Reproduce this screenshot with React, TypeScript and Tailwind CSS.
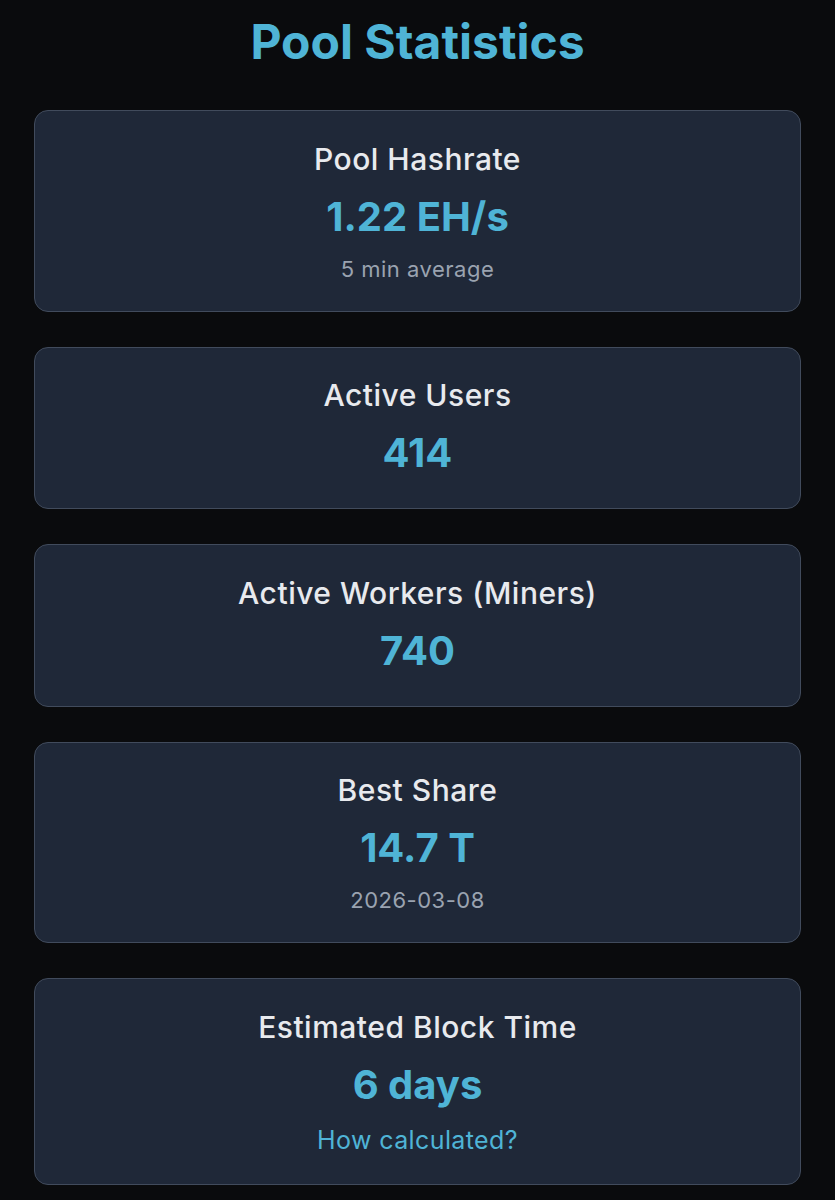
const stats = [
  { label: 'Pool Hashrate', value: '1.22 EH/s', sub: '5 min average' },
  { label: 'Active Users', value: '414' },
  { label: 'Active Workers (Miners)', value: '740' },
  { label: 'Best Share', value: '14.7 T', sub: '2026-03-08' },
  { label: 'Estimated Block Time', value: '6 days', link: 'How calculated?' },
]

export default function App() {
  return (
    <div className="min-h-screen bg-[#0a0b0d] px-[34px] pt-[18px] pb-10 font-['Inter','Noto_Sans',sans-serif]">
      <h1 className="text-center text-[48px] leading-[48px] font-bold text-[#4fb4d6]">
        Pool Statistics
      </h1>

      <div className="mt-[44px] flex flex-col gap-[35px]">
        {stats.map((s) => (
          <div
            key={s.label}
            className="rounded-[14px] border-[1.5px] border-[#414b5c] bg-[#1f2838] px-6 pt-[28.5px] pb-[31px] text-center"
          >
            <div className="text-[30px] leading-[38px] font-medium tracking-[0.5px] text-[#e8eaee]">{s.label}</div>
            <div className="mt-[15px] text-[40px] leading-[48px] font-bold text-[#4fb4d6]">{s.value}</div>
            {s.sub && (
              <div className="mt-[17px] text-[22px] leading-[22px] tracking-[0.5px] text-[#9aa3b0]">{s.sub}</div>
            )}
            {s.link && (
              <div className="mt-[19px] text-[25px] leading-[25px] tracking-[0.4px] text-[#4fb4d6]">{s.link}</div>
            )}
          </div>
        ))}
      </div>
    </div>
  )
}
